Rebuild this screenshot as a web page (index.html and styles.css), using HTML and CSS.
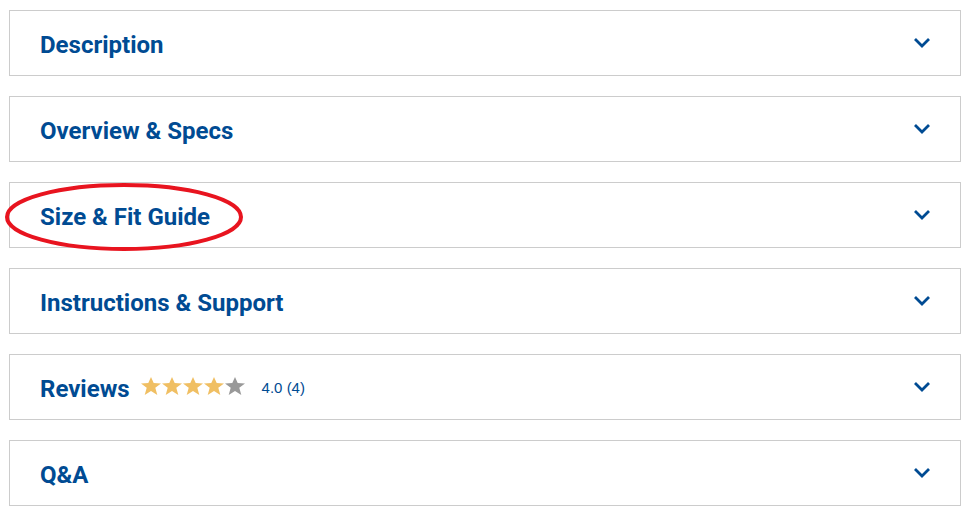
FILE: index.html
```html
<!DOCTYPE html>
<html lang="en">
<head>
<meta charset="utf-8">
<link rel="stylesheet" href="styles.css">
</head>
<body>
<div class="accordion">
  <div class="item">
    <span class="title">Description</span>
    <svg class="chev" viewBox="0 0 18 11" width="18" height="11"><path d="M2 2 L9 9 L16 2" fill="none" stroke="#004b93" stroke-width="2.8"/></svg>
  </div>
  <div class="item">
    <span class="title">Overview &amp; Specs</span>
    <svg class="chev" viewBox="0 0 18 11" width="18" height="11"><path d="M2 2 L9 9 L16 2" fill="none" stroke="#004b93" stroke-width="2.8"/></svg>
  </div>
  <div class="item">
    <span class="title">Size &amp; Fit Guide</span>
    <svg class="ring" viewBox="0 0 240 70" width="240" height="70"><ellipse cx="120" cy="35" rx="117" ry="32" fill="none" stroke="#e8141f" stroke-width="4"/></svg>
    <svg class="chev" viewBox="0 0 18 11" width="18" height="11"><path d="M2 2 L9 9 L16 2" fill="none" stroke="#004b93" stroke-width="2.8"/></svg>
  </div>
  <div class="item">
    <span class="title">Instructions &amp; Support</span>
    <svg class="chev" viewBox="0 0 18 11" width="18" height="11"><path d="M2 2 L9 9 L16 2" fill="none" stroke="#004b93" stroke-width="2.8"/></svg>
  </div>
  <div class="item">
    <span class="title">Reviews</span>
    <span class="stars">
      <svg viewBox="0 0 20 18" width="20" height="18"><polygon class="on" points="10,0 12.7,6 20,6.5 14.3,10.8 16.3,18 10,14 3.7,18 5.7,10.8 0,6.5 7.3,6"/></svg>
      <svg viewBox="0 0 20 18" width="20" height="18"><polygon class="on" points="10,0 12.7,6 20,6.5 14.3,10.8 16.3,18 10,14 3.7,18 5.7,10.8 0,6.5 7.3,6"/></svg>
      <svg viewBox="0 0 20 18" width="20" height="18"><polygon class="on" points="10,0 12.7,6 20,6.5 14.3,10.8 16.3,18 10,14 3.7,18 5.7,10.8 0,6.5 7.3,6"/></svg>
      <svg viewBox="0 0 20 18" width="20" height="18"><polygon class="on" points="10,0 12.7,6 20,6.5 14.3,10.8 16.3,18 10,14 3.7,18 5.7,10.8 0,6.5 7.3,6"/></svg>
      <svg viewBox="0 0 20 18" width="20" height="18"><polygon class="off" points="10,0 12.7,6 20,6.5 14.3,10.8 16.3,18 10,14 3.7,18 5.7,10.8 0,6.5 7.3,6"/></svg>
    </span>
    <span class="rating">4.0 (4)</span>
    <svg class="chev" viewBox="0 0 18 11" width="18" height="11"><path d="M2 2 L9 9 L16 2" fill="none" stroke="#004b93" stroke-width="2.8"/></svg>
  </div>
  <div class="item">
    <span class="title">Q&amp;A</span>
    <svg class="chev" viewBox="0 0 18 11" width="18" height="11"><path d="M2 2 L9 9 L16 2" fill="none" stroke="#004b93" stroke-width="2.8"/></svg>
  </div>
</div>
</body>
</html>
```

FILE: styles.css
```css
html, body {
  margin: 0;
  padding: 0;
  background: #fff;
}
.accordion {
  padding: 10px 11px 0 9px;
  display: flex;
  flex-direction: column;
  gap: 20px;
}
.item {
  position: relative;
  height: 64px;
  border: 1px solid #cccccc;
  display: flex;
  align-items: center;
  padding: 0 29px 0 30px;
}
.title {
  font-family: Roboto, "Noto Sans", sans-serif;
  font-weight: 700;
  font-size: 24px;
  line-height: 28px;
  padding-top: 3px;
  color: #004b93;
}
.chev {
  margin-left: auto;
  display: block;
  margin-bottom: 2px;
}
.stars {
  display: flex;
  margin-left: 11px;
  margin-bottom: 3px;
  gap: 1px;
}
.stars svg { display: block; }
.stars .on { fill: #f0bf63; }
.stars .off { fill: #999999; }
.rating {
  margin-left: 17px;
  font-family: "Liberation Sans", Arial, sans-serif;
  font-size: 15px;
  color: #004b93;
}
.ring {
  position: absolute;
  left: -6px;
  top: -1px;
}
```
